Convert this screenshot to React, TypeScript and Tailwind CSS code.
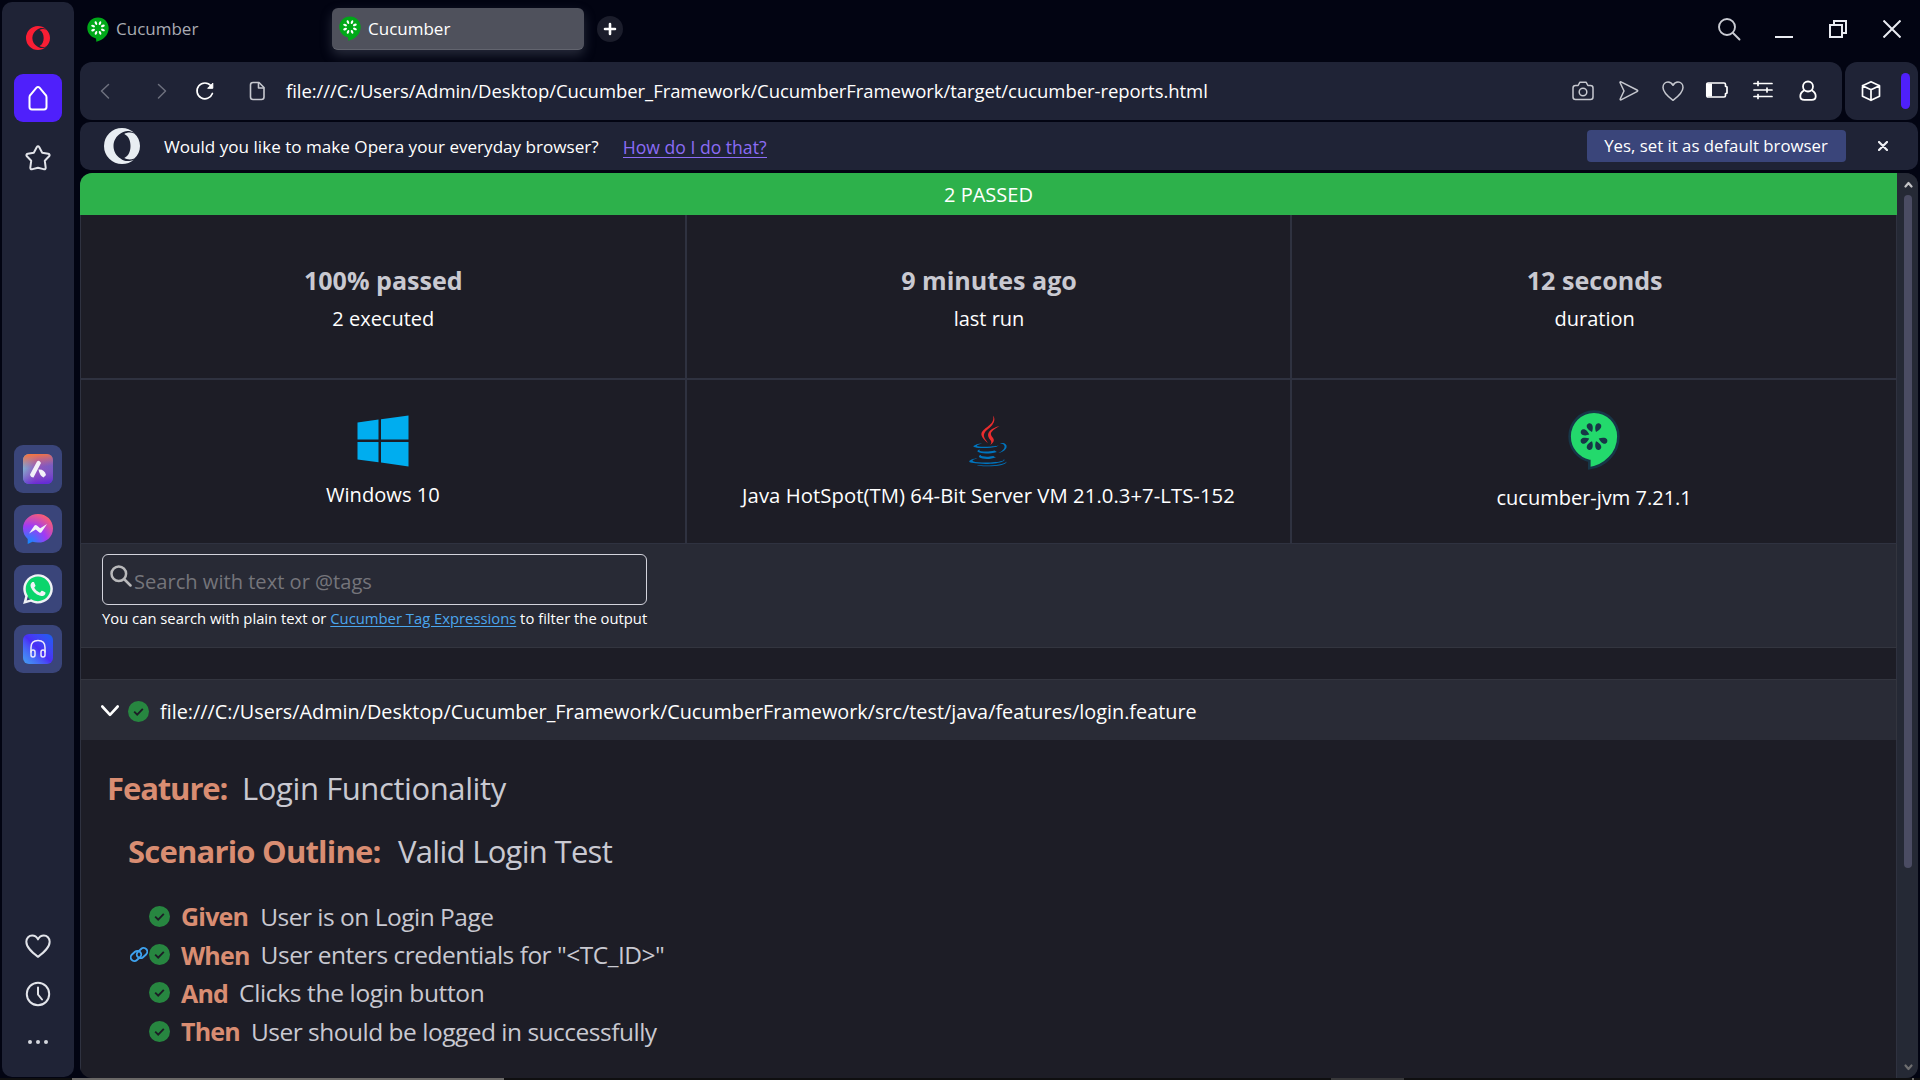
import React from 'react';
import { FaWhatsapp } from 'react-icons/fa';

type SvgProps = { className?: string; children: React.ReactNode; box?: string; sw?: number };

function Line({ className = '', children, box = '0 0 24 24', sw = 1.6 }: SvgProps) {
  return (
    <svg viewBox={box} className={`shrink-0 ${className}`} fill="none" stroke="currentColor" strokeWidth={sw} strokeLinecap="round" strokeLinejoin="round">
      {children}
    </svg>
  );
}

function TabCucumber() {
  return (
    <svg viewBox="0 0 22 25" className="h-[25px] w-[22px] shrink-0">
      <path fill="#00a818" d="M11 0.5C5 0.5 0.3 5.2 0.3 11.1c0 5 3.6 9.2 8.7 10.3l.3 3.4c6.500-1.200 12.400-6.500 12.400-13.700C21.700 5.200 17 .5 11 .5z" />
      <g fill="#fff">
        {[22, 67, 112, 157, 202, 247, 292, 337].map((a) => (
          <ellipse key={a} cx="11" cy="5.700" rx="1.150" ry="2" transform={`rotate(${a} 11 11)`} />
        ))}
      </g>
    </svg>
  );
}

function CucumberLogo() {
  return (
    <svg viewBox="0 0 52 60" className="h-[60px] w-[52px] shrink-0">
      <path
        fill="#23d96c"
        stroke="#173647"
        strokeWidth="2.600"
        d="M26 1.600C12.600 1.600 1.600 12.700 1.600 26.400c0 12.200 8.500 22 19.700 24.500v7.400C36.500 56.200 50.400 43.500 50.400 26.400 50.400 12.700 39.500 1.600 26 1.600z"
      />
      <g fill="#173647">
        {[23, 112, 157, 203, 248, 293, 337].map((a) => (
          <path key={a} d="M26 21.500c-1.700-1.800-2.900-4.100-2.900-6 0-1.800 1.200-3.100 2.900-3.100s2.900 1.300 2.900 3.100c0 1.900-1.200 4.200-2.900 6z" transform={`rotate(${a} 26 26.600)`} />
        ))}
      </g>
    </svg>
  );
}

function JavaLogo() {
  return (
    <svg viewBox="0 0 128 128" className="h-[52px] w-[52px] shrink-0">
      <g fill="#0074BD">
        <path d="M47.617 98.120s-4.767 2.774 3.397 3.710c9.892 1.130 14.947.968 25.845-1.092 0 0 2.871 1.795 6.873 3.351-24.439 10.470-55.308-.607-36.115-5.969zm-2.988-13.665s-5.348 3.959 2.823 4.805c10.567 1.091 18.910 1.180 33.354-1.600 0 0 1.993 2.025 5.132 3.131-29.542 8.640-62.446.680-41.309-6.336z" />
        <path d="M102.123 108.229s3.529 2.910-3.888 5.159c-14.102 4.272-58.706 5.560-71.094.171-4.451-1.938 3.899-4.625 6.526-5.192 2.739-.593 4.303-.485 4.303-.485-4.953-3.487-32.013 6.850-13.743 9.815 49.821 8.076 90.817-3.637 77.896-9.468zM49.912 70.294s-22.686 5.389-8.033 7.348c6.188.828 18.518.638 30.011-.326 9.390-.789 18.813-2.474 18.813-2.474s-3.308 1.419-5.704 3.053c-23.042 6.061-67.544 3.238-54.731-2.958 10.832-5.239 19.644-4.643 19.644-4.643zm40.697 22.747c23.421-12.167 12.591-23.860 5.032-22.285-1.848.385-2.677.720-2.677.720s.688-1.079 2-1.543c14.953-5.255 26.451 15.503-4.823 23.725 0-.002.359-.327.468-.617z" />
        <path d="M52.214 126.021c22.476 1.437 57-.8 57.817-11.436 0 0-1.571 4.032-18.577 7.231-19.186 3.612-42.854 3.191-56.887.874 0 .001 2.875 2.381 17.647 3.331z" />
      </g>
      <g fill="#EA2D2E">
        <path d="M69.802 61.271c6.025 6.935-1.580 13.170-1.580 13.170s15.289-7.891 8.269-17.777c-6.559-9.215-11.587-13.792 15.635-29.580 0 .001-42.731 10.670-22.324 34.187z" />
        <path d="M76.491 1.587S89.459 14.563 64.188 34.510c-20.266 16.006-4.621 25.130-.007 35.559-11.831-10.673-20.509-20.070-14.688-28.815C58.041 28.420 81.722 22.195 76.491 1.587z" />
      </g>
    </svg>
  );
}

function WindowsLogo() {
  return (
    <svg viewBox="0 0 52 52" className="h-[52px] w-[52px] shrink-0" fill="#00adef">
      <path d="M0.500 7.500 21.500 4.600V24.500H0.500zM24 4.200 51.500 0.400V24.500H24zM0.500 27H21.500V47.200L0.500 44.400zM24 27H51.500V51.400L24 47.500z" />
    </svg>
  );
}

function Opera({ className }: { className: string }) {
  return (
    <svg viewBox="0 0 36 36" className={`shrink-0 ${className}`} fill="currentColor">
      <path d="M18 0A18 18 0 1 0 18 36C22.600 36 26.800 34.300 30 31.400C25.500 33.800 20.500 33.800 16.500 30.500C12.500 28 9.500 23.500 9.500 18S12.500 8 16.500 5.500C20.500 2.200 25.500 2.200 30 4.600C26.800 1.700 22.600 0 18 0z" />
      <path d="M20.300 6C22.500 4.400 26.500 4 30.300 5.400C33.900 8.500 36 13 36 18S33.900 27.500 30.300 30.600C26.500 32 22.500 31.600 20.300 30C24.600 28 26.500 23.200 26.500 18S24.600 8 20.300 6z" />
    </svg>
  );
}

function Check() {
  return (
    <svg viewBox="0 0 21 21" className="h-[21px] w-[21px] shrink-0">
      <circle cx="10.500" cy="10.500" r="10.500" fill="#278640" />
      <path d="M6.200 10.600l3 3 5.600-5.700" fill="none" stroke="#1d1d26" strokeWidth="1.900" />
    </svg>
  );
}

const heart = <path d="M12 21.300C7 17.500 2 13.500 2 8.400 2 5.200 4.300 3 7 3c2.100 0 3.900 1.200 5 3.300C13.100 4.200 14.900 3 17 3c2.700 0 5 2.200 5 5.400 0 5.100-5 9.100-10 12.900z" />;

function AppTile({ children }: { children: React.ReactNode }) {
  return <div className="flex h-12 w-12 items-center justify-center rounded-[9px] bg-[#3a457a]">{children}</div>;
}

function Sidebar() {
  return (
    <aside className="mt-[2px] ml-[2px] flex h-[1075px] w-[72px] shrink-0 flex-col items-center rounded-[10px] bg-[#1f2336] text-[#e2e4ea]">
      <Opera className="mt-6 h-6 w-6 text-[#fa1e34]" />
      <div className="mt-6 flex h-12 w-12 items-center justify-center rounded-[9px] bg-[#4f20fb] text-white">
        <Line className="h-7 w-7" box="0 0 28 28" sw={2}>
          <path d="M5.500 13.200c0-1 .3-1.700 1-2.400L12.500 3.700c.9-1 2.100-1 3 0L21.500 10.800c.7.700 1 1.400 1 2.400V23c0 1.600-.8 2.400-2.400 2.400H7.900C6.300 25.400 5.500 24.600 5.500 23z" />
        </Line>
      </div>
      <Line className="mt-[22px] h-7 w-7" box="0 0 28 28" sw={2}>
        <path d="M12.700 3.300q1.300-2 2.600 0l2.900 5.400 6 1.100q2.300.6.900 2.500l-4.300 4.500.9 6.800q0 2.300-2.200 1.500L14 23.700l-5.500 1.400q-2.200.8-2.200-1.500l.9-6.800-4.300-4.500q-1.400-1.900.9-2.500l6-1.100z" />
      </Line>
      <div className="mt-[273px] flex flex-col gap-3">
        <AppTile>
          <svg viewBox="0 0 30 30" className="h-[30px] w-[30px]">
            <defs>
              <linearGradient id="aria" x1="0" y1="0.500" x2="1" y2="0.600">
                <stop offset="0" stopColor="#63cbe8" />
                <stop offset="0.450" stopColor="#7b4ccc" />
                <stop offset="1" stopColor="#5557d6" />
              </linearGradient>
              <linearGradient id="ariaTop" x1="0.400" y1="0" x2="0.500" y2="1">
                <stop offset="0" stopColor="#f5743f" />
                <stop offset="0.450" stopColor="#c0699a" stopOpacity="0.300" />
                <stop offset="1" stopColor="#6420d8" stopOpacity="0.800" />
              </linearGradient>
            </defs>
            <rect width="30" height="30" rx="6" fill="url(#aria)" />
            <rect width="30" height="30" rx="6" fill="url(#ariaTop)" />
            <path d="M7 20.500 14 7.500q2-2 4 1.500L10.500 23.500Q7.500 23.500 7 20.500zM15.500 15.500q6-.5 7.500 5.500l-2.500 2.500q-4-2-5-8z" fill="#f2f1f8" />
          </svg>
        </AppTile>
        <AppTile>
          <svg viewBox="0 0 30 30" className="h-[30px] w-[30px]">
            <defs>
              <radialGradient id="msg" cx="0.200" cy="1" r="1.100">
                <stop offset="0" stopColor="#0a8fff" />
                <stop offset="0.550" stopColor="#a03af5" />
                <stop offset="1" stopColor="#ff5f6d" />
              </radialGradient>
            </defs>
            <path d="M15 0C6.600 0 0 6.200 0 14.500c0 4.300 1.800 7.900 4.700 10.500V30l4.800-2.200c1.700.5 3.500.8 5.500.8 8.400 0 15-6 15-14.200S23.400 0 15 0z" fill="url(#msg)" />
            <path d="M6 19.500 11.500 11.500q1.200-1 2.400 0l3.300 2.800 6.800-4.300-5.500 8.300q-1.200 1-2.400 0L12.800 15.500z" fill="#f2f1f8" />
          </svg>
        </AppTile>
        <AppTile>
          <div className="relative h-[30px] w-[30px]">
            <div className="absolute top-[2px] left-[2px] h-[26px] w-[26px] rounded-full bg-[#0bd56c]" />
            <FaWhatsapp className="absolute -top-[2px] -left-[2px] h-[34px] w-[34px] text-[#f0f2f6]" />
          </div>
        </AppTile>
        <AppTile>
          <div className="flex h-[30px] w-[30px] items-center justify-center rounded-[6px] bg-linear-to-tr from-[#45a0f2] via-[#4a2cf6] to-[#1160f0] text-[#eceafc]">
            <Line className="h-5 w-5" box="0 0 20 20" sw={1.5}>
              <path d="M3 13V8.500C3 4 5.800 1.500 10 1.500s7 2.500 7 7V13" />
              <rect x="3" y="11" width="4" height="7" rx="2" />
              <rect x="13" y="11" width="4" height="7" rx="2" />
            </Line>
          </div>
        </AppTile>
      </div>
      <Line className="mt-[259px] h-[28px] w-[28px]" sw={1.7}>{heart}</Line>
      <Line className="mt-[20px] h-7 w-7" box="0 0 28 28" sw={2}>
        <circle cx="14" cy="14" r="11.200" />
        <path d="M14 7.500V14.500l4 5" />
      </Line>
      <div className="mt-[32px] flex gap-1">
        <i className="h-1 w-1 rounded-full bg-[#d5d7de]" />
        <i className="h-1 w-1 rounded-full bg-[#d5d7de]" />
        <i className="h-1 w-1 rounded-full bg-[#d5d7de]" />
      </div>
    </aside>
  );
}

function TabBar() {
  return (
    <div className="flex h-[62px] items-start pt-2">
      <div className="flex h-[42px] w-[252px] items-center gap-[7px] pl-[7px] text-[17px] text-[#a9abb3]">
        <TabCucumber />
        <span>Cucumber</span>
      </div>
      <div className="flex h-[42px] w-[252px] items-center gap-[7px] rounded-[6px] border-b border-[#62646e] bg-[#4f515c] pl-[7px] text-[17px] text-white shadow-[0_5px_12px_rgba(110,114,135,0.35)]">
        <TabCucumber />
        <span>Cucumber</span>
      </div>
      <div className="mt-2 ml-[13px] flex h-[26px] w-[26px] items-center justify-center rounded-full bg-[#1b1d2b] text-white">
        <Line className="h-[14px] w-[14px]" box="0 0 14 14" sw={2.6}>
          <path d="M7 2v10M2 7h10" />
        </Line>
      </div>
      <div className="mt-[9px] mr-[17px] ml-auto flex items-center gap-9 text-[#e9ebf1]">
        <Line className="-mr-[2px] h-6 w-6 text-[#c9cbd2]" box="0 0 24 24" sw={1.9}>
          <circle cx="10" cy="10" r="8" />
          <path d="M16 16l6.500 6.500" />
        </Line>
        <div className="mt-[16px] h-[2px] w-[18px] bg-[#e9ebf1]" />
        <svg viewBox="0 0 18 18" className="h-[18px] w-[18px]" fill="none" stroke="currentColor" strokeWidth="2">
          <path d="M1 5h12v12H1zM5 5V1h12v12h-4" />
        </svg>
        <svg viewBox="0 0 18 18" className="h-[18px] w-[18px]" fill="none" stroke="currentColor" strokeWidth="2">
          <path d="M.5.5l17 17M17.500.5l-17 17" />
        </svg>
      </div>
    </div>
  );
}

function AddressBar() {
  return (
    <div className="flex h-[58px] gap-[3px]">
      <div className="flex w-[1762px] items-center rounded-[12px] bg-[#1f2336] text-[#c6c8cf]">
        <Line className="ml-4 h-5 w-5 text-[#6d707e]" box="0 0 20 20" sw={1.5}>
          <path d="M12.500 3.500L5.500 10l7 7" />
        </Line>
        <Line className="ml-9 h-5 w-5 text-[#6d707e]" box="0 0 20 20" sw={1.5}>
          <path d="M6.500 3.500l7 6.500-7 7" />
        </Line>
        <Line className="ml-[23px] h-5 w-5 text-white" box="0 0 20 20" sw={1.7}>
          <path d="M17.400 12.500A7.900 7.900 0 1 1 16 4.800" />
          <path d="M17.800 2.500V7.300H13z" fill="currentColor" strokeWidth="1" />
        </Line>
        <Line className="ml-[32px] h-5 w-5" box="0 0 20 20" sw={1.6}>
          <path d="M6 1.500h6l5 5V16c0 1.600-.9 2.500-2.500 2.500H6c-1.600 0-2.500-.9-2.500-2.500V4c0-1.600.9-2.500 2.500-2.500z" />
          <path d="M11.500 2v5H16.500" />
        </Line>
        <span className="ml-[19px] text-[18.5px] tracking-[-0.05px] whitespace-nowrap text-white">
          file:///C:/Users/Admin/Desktop/Cucumber_Framework/CucumberFramework/target/cucumber-reports.html
        </span>
        <div className="mr-[22px] ml-auto flex items-center gap-[21px]">
          <Line className="h-6 w-6" sw={1.5}>
            <path d="M4.500 6.500h2.600L8.800 3.300h6.400l1.700 3.200h2.600c1.500 0 2.500 1 2.500 2.500v9c0 1.500-1 2.500-2.500 2.500h-15C3 20.500 2 19.500 2 18V9c0-1.500 1-2.500 2.500-2.500z" />
            <circle cx="12" cy="13" r="3.800" />
          </Line>
          <Line className="h-6 w-6" sw={1.5}>
            <path d="M4 3.500q0-1 1-.6L21 11q1.500.8 0 1.600L5 20.900q-1 .4-.8-.9L8 12z" />
          </Line>
          <Line className="h-6 w-6" sw={1.5}>{heart}</Line>
          <Line className="-ml-px mr-px h-6 w-6 text-white" sw={1.7}>
            <path d="M3 4h16c1 0 1.500.6 1.500 1.500v1.800l1.500.8v5.800l-1.500.8V16.500c0 .9-.5 1.500-1.500 1.500H3c-.7 0-1.200-.5-1.200-1.200V5.200c0-.7.5-1.200 1.200-1.200z" />
            <path d="M2 4.500h5v13H2z" fill="currentColor" stroke="none" />
          </Line>
          <Line className="h-6 w-6 text-white" sw={1.7}>
            <path d="M3 4.500h18M3 11h18M3 17.500h18M7 2.500v4M16 9v4M7 15.500v4" />
          </Line>
          <Line className="h-6 w-6 text-white" sw={1.8}>
            <circle cx="12" cy="7.500" r="5" />
            <path d="M8 11.500C5.500 13 4.300 15 4.300 17.200c0 2.500 1.700 3.600 4 3.600h7.400c2.300 0 4-1.100 4-3.600 0-2.200-1.200-4.200-3.700-5.700" />
          </Line>
        </div>
      </div>
      <div className="flex flex-1 items-center rounded-[12px] bg-[#1f2336] text-white">
        <Line className="ml-[14px] h-6 w-6" sw={1.7}>
          <path d="M12 2.700l8.500 4v10.600L12 21.300l-8.500-4V6.700zM3.500 6.700l8.500 4 8.500-4M12 10.700v10.600" />
        </Line>
        <div className="mr-[8px] ml-auto h-9 w-[9px] rounded-full bg-[#4f20fb]" />
      </div>
    </div>
  );
}

function PromptBar() {
  return (
    <div className="mt-[2px] flex h-12 items-center rounded-[10px] bg-[#1f2336] pb-px">
      <Opera className="ml-6 h-9 w-9 text-[#e8edf2]" />
      <span className="ml-6 pt-[3px] text-[17.1px] whitespace-nowrap text-white">Would you like to make Opera your everyday browser?</span>
      <a className="mt-[3px] ml-6 border-b border-[#8b6cf5] text-[17.6px] leading-5 whitespace-nowrap text-[#8b6cf5]">How do I do that?</a>
      <div className="mr-[72px] ml-auto flex h-8 w-[259px] items-center justify-center rounded-[4px] bg-[#3a457a] pt-px pr-px text-[16.8px] text-white">
        Yes, set it as default browser
      </div>
      <Line className="-ml-[40px] mr-[30px] h-[10px] w-[10px] text-[#f0f1f5]" box="0 0 10 10" sw={2.2}>
        <path d="M1 1l8 8M9 1L1 9" />
      </Line>
    </div>
  );
}

function Stat({ value, label }: { value: string; label: string }) {
  return (
    <div className="flex h-[164px] flex-col items-center border-x border-b border-[#2f3240] pt-[47px] pl-px">
      <div className="h-9 text-[25.1px] leading-9 font-bold text-[#c9c9d1]">{value}</div>
      <div className="h-10 pt-px text-[20px] leading-10 text-white">{label}</div>
    </div>
  );
}

function Platform({ icon, label, className, labelClass }: { icon: React.ReactNode; label: string; className: string; labelClass: string }) {
  return (
    <div className={`flex h-[165px] flex-col items-center border border-[#2f3240] ${className}`}>
      {icon}
      <div className={`mt-2 h-10 leading-10 whitespace-nowrap text-white ${labelClass}`}>{label}</div>
    </div>
  );
}

function Step({ keyword, text, link, textClass }: { keyword: string; text: string; link?: boolean; textClass: string }) {
  return (
    <div className="flex h-[38.3px] items-center pl-[49px]">
      {link && (
        <Line className="mr-px h-[19px] w-[18px] text-[#3ea2ee]" box="0 0 18 18" sw={1.9}>
          <rect x="0.200" y="6.700" width="11.500" height="7.400" rx="3.700" transform="rotate(-42 6 10.400)" />
          <rect x="6.300" y="3.900" width="11.500" height="7.400" rx="3.700" transform="rotate(-42 12 7.600)" />
        </Line>
      )}
      <div className={link ? '' : 'ml-[19px]'}>
        <Check />
      </div>
      <span className="ml-[11px] pt-[2px] text-[25px] font-bold tracking-[-0.8px] text-[#d98d72]">{keyword}</span>
      <span className={`pt-[2px] text-[24.5px] whitespace-nowrap text-[#c9c9d1] ${textClass}`}>{text}</span>
    </div>
  );
}

function Report() {
  return (
    <div className="mt-[3px] flex h-[905px] overflow-hidden rounded-[12px] bg-[#1d1d26]">
      <main className="w-[1817px]">
        <div className="flex h-[42px] items-center justify-center bg-[#2db14b] pt-[2px] text-[20px] text-white">2 PASSED</div>
        <div className="grid grid-cols-3">
          <Stat value="100% passed" label="2 executed" />
          <Stat value="9 minutes ago" label="last run" />
          <Stat value="12 seconds" label="duration" />
          <Platform icon={<WindowsLogo />} label="Windows 10" className="pt-[35px]" labelClass="text-[20.1px]" />
          <Platform icon={<JavaLogo />} label="Java HotSpot(TM) 64-Bit Server VM 21.0.3+7-LTS-152" className="pt-[35px]" labelClass="text-[20.3px] tracking-[0.05px]" />
          <Platform icon={<CucumberLogo />} label="cucumber-jvm 7.21.1" className="pt-[30px]" labelClass="text-[20px]" />
        </div>
        <section className="h-[104px] border-x border-b border-[#33353f] bg-[#282a35] pt-[10px] pl-[21px]">
          <div className="flex h-[51px] w-[545px] items-start rounded-[6px] border border-[#d3d3dc] pl-[7px]">
            <Line className="mt-[10px] h-[22px] w-[22px] text-[#b9b9bb]" box="0 0 22 22" sw={2.5}>
              <circle cx="8.800" cy="8.800" r="7.300" />
              <path d="M14.500 14.500l6 6" />
            </Line>
            <span className="ml-[2px] pt-[7px] text-[20.1px] leading-10 text-[#75757b]">Search with text or @tags</span>
          </div>
          <p className="pt-px text-[14.8px] leading-6 whitespace-nowrap text-white">
            You can search with plain text or <a className="text-[#4ba6ee] underline underline-offset-2">Cucumber Tag Expressions</a> to filter the output
          </p>
        </section>
        <div className="h-[31px] border-x border-[#2f3240]" />
        <div className="flex h-[61px] items-center border-x border-t border-[#33353f] bg-[#292b36] pt-[2px] pl-5">
          <Line className="h-[14px] w-[18px] text-white" box="0 0 18 14" sw={2.6}>
            <path d="M1.300 2.500L9 10.800l7.700-8.300" />
          </Line>
          <div className="ml-[9px]">
            <Check />
          </div>
          <span className="ml-[11px] pt-px text-[19.82px] whitespace-nowrap text-white">
            file:///C:/Users/Admin/Desktop/Cucumber_Framework/CucumberFramework/src/test/java/features/login.feature
          </span>
        </div>
        <div className="h-[338px] border-x border-[#2f3240] pt-[23px]">
          <h1 className="flex h-[50px] items-center pl-[26px] text-[31px] whitespace-nowrap text-[#c9c9d1]">
            <b className="w-[135px] tracking-[-1.1px] text-[#d98d72]">Feature:</b>
            <span className="tracking-[-0.4px]">Login Functionality</span>
          </h1>
          <h2 className="mt-[13px] flex h-[50px] items-center pl-[47px] text-[31px] whitespace-nowrap text-[#c9c9d1]">
            <b className="w-[270px] tracking-[-0.8px] text-[#d98d72]">Scenario Outline:</b>
            <span className="tracking-[-0.7px]">Valid Login Test</span>
          </h2>
          <div className="mt-[21px]">
            <Step keyword="Given" text="User is on Login Page" textClass="ml-[12px] tracking-[-0.5px]" />
            <Step keyword="When" text={'User enters credentials for "<TC_ID>"'} link textClass="ml-[11px] tracking-[-0.5px]" />
            <Step keyword="And" text="Clicks the login button" textClass="ml-[11px] tracking-[-0.35px]" />
            <Step keyword="Then" text="User should be logged in successfully" textClass="ml-[11px] tracking-[-0.5px]" />
          </div>
        </div>
      </main>
      <div className="flex flex-1 flex-col items-center bg-[#252935] pl-px text-[#c3c3c6]">
        <Line className="mt-[8px] h-[7px] w-[9px]" box="0 0 9 7" sw={2.2}>
          <path d="M1.500 5.500L4.500 2l3 3.500" />
        </Line>
        <div className="mt-[7px] h-[673px] w-2 rounded-full bg-[#4b4c63]" />
        <Line className="mt-auto mb-[7px] h-[7px] w-[9px] text-[#6e6e70]" box="0 0 9 7" sw={2.2}>
          <path d="M1.500 1.500L4.500 5l3-3.500" />
        </Line>
      </div>
    </div>
  );
}

export default function App() {
  return (
    <div className="h-[1080px] w-[1920px] overflow-hidden bg-[#020412] font-['Open_Sans','Noto_Sans',sans-serif]">
      <div className="flex h-[1078px]">
        <Sidebar />
        <div className="ml-[6px] w-[1838px]">
          <TabBar />
          <AddressBar />
          <PromptBar />
          <Report />
        </div>
      </div>
      <div className="flex h-[2px] bg-[#0f0f10]">
        <div className="ml-[72px] w-[432px] bg-[#6b6967]" />
        <div className="ml-[827px] w-[73px] bg-[#38383a]" />
        <div className="ml-[508px] w-[2px] bg-[#6b6967]" />
      </div>
    </div>
  );
}
